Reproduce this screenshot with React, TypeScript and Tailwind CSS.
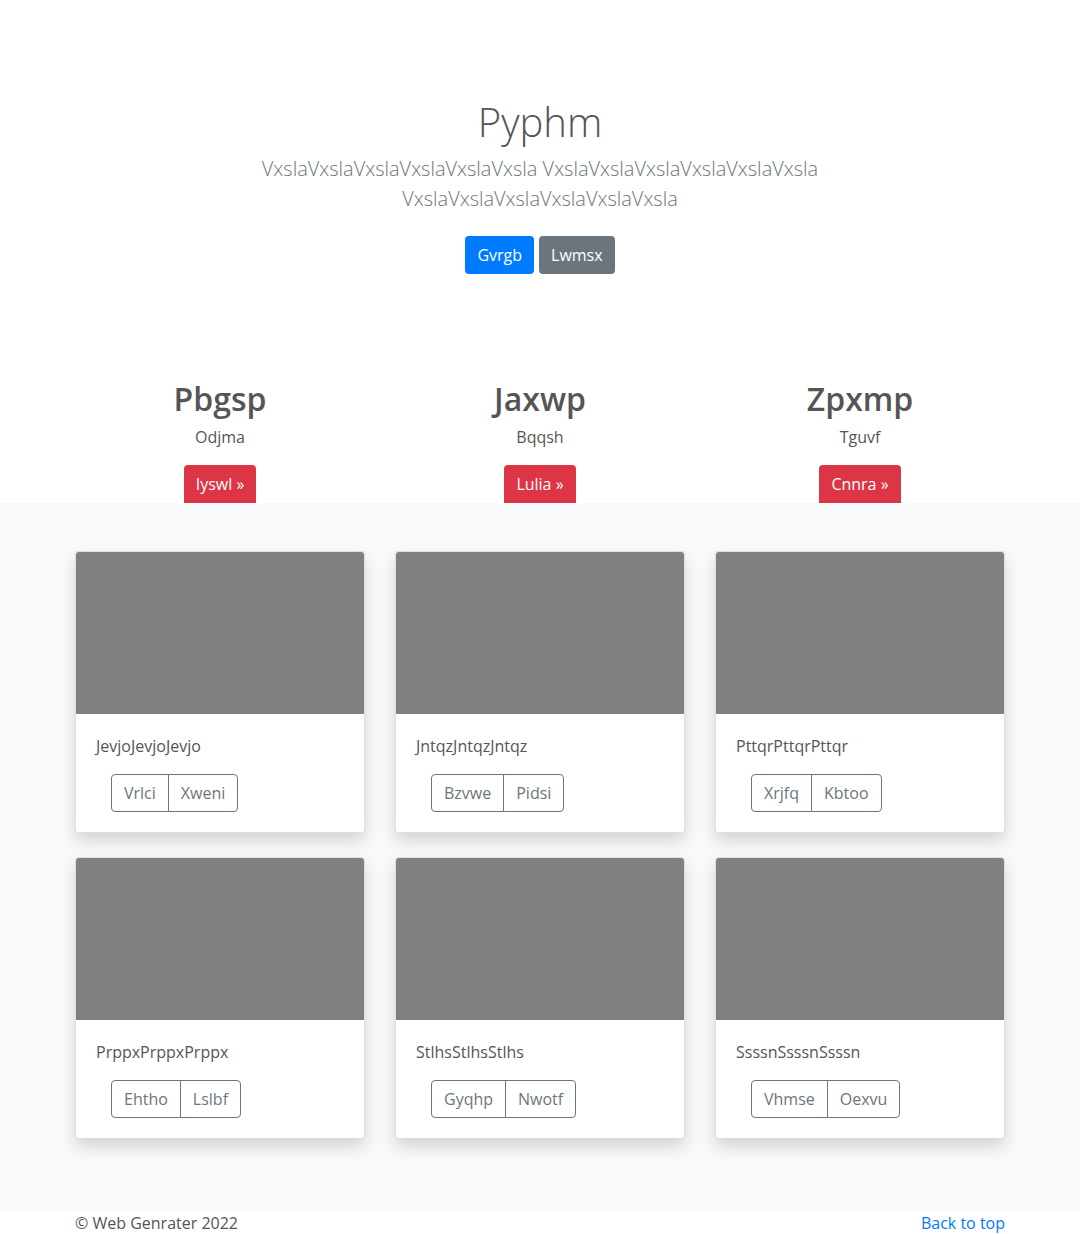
const features = [
  { title: "Pbgsp", text: "Odjma", btn: "Iyswl" },
  { title: "Jaxwp", text: "Bqqsh", btn: "Lulia" },
  { title: "Zpxmp", text: "Tguvf", btn: "Cnnra" },
];

const cards = [
  { text: "JevjoJevjoJevjo", a: "Vrlci", b: "Xweni" },
  { text: "JntqzJntqzJntqz", a: "Bzvwe", b: "Pidsi" },
  { text: "PttqrPttqrPttqr", a: "Xrjfq", b: "Kbtoo" },
  { text: "PrppxPrppxPrppx", a: "Ehtho", b: "Lslbf" },
  { text: "StlhsStlhsStlhs", a: "Gyqhp", b: "Nwotf" },
  { text: "SsssnSsssnSsssn", a: "Vhmse", b: "Oexvu" },
];

export default function App() {
  return (
    <div className="min-h-screen bg-white text-[#555] text-base leading-6" style={{ fontFamily: '"Segoe UI", "Open Sans", "Noto Sans", sans-serif' }}>
      {/* hero */}
      <section className="pt-[98px] pb-[106px] text-center">
        <h1 className="text-[40px] leading-[48px] font-light mb-2 text-[#555]">Pyphm</h1>
        <p className="mx-auto max-w-[610px] text-xl leading-[30px] font-light text-[#6c757d]">
          VxslaVxslaVxslaVxslaVxslaVxsla VxslaVxslaVxslaVxslaVxslaVxsla VxslaVxslaVxslaVxslaVxslaVxsla
        </p>
        <div className="mt-[22px] flex justify-center gap-[5px]">
          <a className="rounded bg-[#007bff] px-3 py-[7px] text-white">Gvrgb</a>
          <a className="rounded bg-[#6c757d] px-3 py-[7px] text-white">Lwmsx</a>
        </div>
      </section>

      {/* features */}
      <section className="mx-auto w-[960px] grid grid-cols-3 text-center">
        {features.map((f) => (
          <div key={f.title} className="px-[15px]">
            <h2 className="text-[32px] leading-[38px] font-semibold mb-[7px] text-[#555]">{f.title}</h2>
            <p className="mb-4">{f.text}</p>
            <a className="inline-block rounded-t bg-[#dc3545] px-3 py-[7px] text-white">{f.btn} »</a>
          </div>
        ))}
      </section>

      {/* album */}
      <section className="bg-[#f8f9fa] pt-12 pb-[48px]">
        <div className="mx-auto w-[960px] grid grid-cols-3">
          {cards.map((c) => (
            <div key={c.text} className="px-[15px] mb-6">
              <div className="overflow-hidden rounded border border-black/[.125] bg-white shadow-[0_8px_16px_rgba(0,0,0,0.15)]">
                <div className="h-[162px] bg-[#808080]" />
                <div className="p-5">
                  <p className="mb-4">{c.text}</p>
                  <div className="ml-[15px] inline-flex text-[#6c757d]">
                    <span className="rounded-l border border-[#6c757d] px-3 py-[6px]">{c.a}</span>
                    <span className="-ml-px rounded-r border border-[#6c757d] px-3 py-[6px]">{c.b}</span>
                  </div>
                </div>
              </div>
            </div>
          ))}
        </div>
      </section>

      {/* footer */}
      <footer className="pb-12">
        <div className="mx-auto w-[960px] px-[15px] flex justify-between">
          <p>© Web Genrater 2022</p>
          <a className="text-[#007bff]">Back to top</a>
        </div>
      </footer>
    </div>
  );
}
